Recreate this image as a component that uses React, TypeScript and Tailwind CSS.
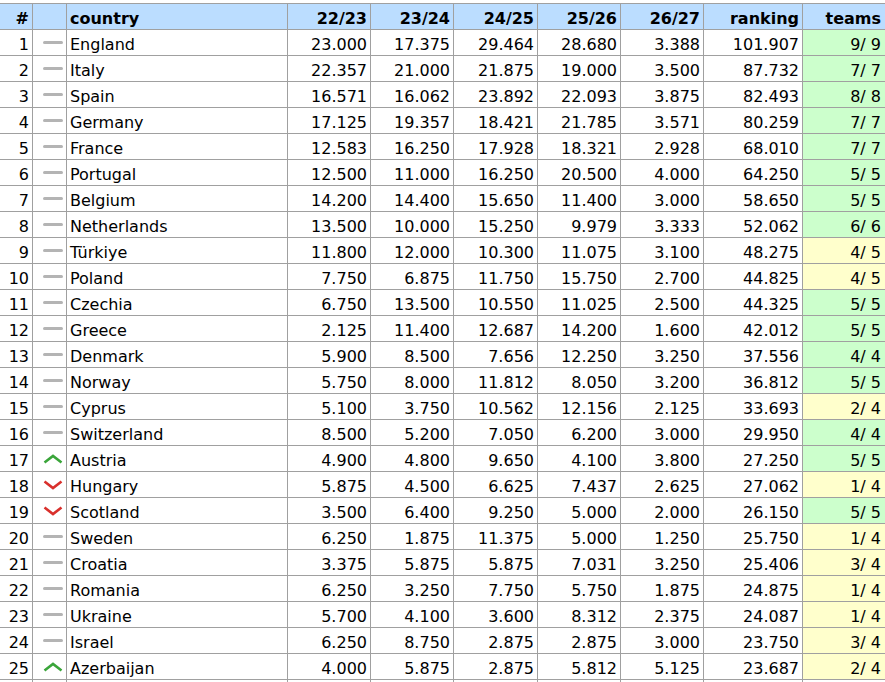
import React from 'react';

type Trend = 'same' | 'up' | 'down';

interface Row {
  country: string;
  trend: Trend;
  seasons: string[];
  ranking: string;
  teams: [number, number];
}

const rows: Row[] = [
  { country: 'England', trend: 'same', seasons: ['23.000', '17.375', '29.464', '28.680', '3.388'], ranking: '101.907', teams: [9, 9] },
  { country: 'Italy', trend: 'same', seasons: ['22.357', '21.000', '21.875', '19.000', '3.500'], ranking: '87.732', teams: [7, 7] },
  { country: 'Spain', trend: 'same', seasons: ['16.571', '16.062', '23.892', '22.093', '3.875'], ranking: '82.493', teams: [8, 8] },
  { country: 'Germany', trend: 'same', seasons: ['17.125', '19.357', '18.421', '21.785', '3.571'], ranking: '80.259', teams: [7, 7] },
  { country: 'France', trend: 'same', seasons: ['12.583', '16.250', '17.928', '18.321', '2.928'], ranking: '68.010', teams: [7, 7] },
  { country: 'Portugal', trend: 'same', seasons: ['12.500', '11.000', '16.250', '20.500', '4.000'], ranking: '64.250', teams: [5, 5] },
  { country: 'Belgium', trend: 'same', seasons: ['14.200', '14.400', '15.650', '11.400', '3.000'], ranking: '58.650', teams: [5, 5] },
  { country: 'Netherlands', trend: 'same', seasons: ['13.500', '10.000', '15.250', '9.979', '3.333'], ranking: '52.062', teams: [6, 6] },
  { country: 'Türkiye', trend: 'same', seasons: ['11.800', '12.000', '10.300', '11.075', '3.100'], ranking: '48.275', teams: [4, 5] },
  { country: 'Poland', trend: 'same', seasons: ['7.750', '6.875', '11.750', '15.750', '2.700'], ranking: '44.825', teams: [4, 5] },
  { country: 'Czechia', trend: 'same', seasons: ['6.750', '13.500', '10.550', '11.025', '2.500'], ranking: '44.325', teams: [5, 5] },
  { country: 'Greece', trend: 'same', seasons: ['2.125', '11.400', '12.687', '14.200', '1.600'], ranking: '42.012', teams: [5, 5] },
  { country: 'Denmark', trend: 'same', seasons: ['5.900', '8.500', '7.656', '12.250', '3.250'], ranking: '37.556', teams: [4, 4] },
  { country: 'Norway', trend: 'same', seasons: ['5.750', '8.000', '11.812', '8.050', '3.200'], ranking: '36.812', teams: [5, 5] },
  { country: 'Cyprus', trend: 'same', seasons: ['5.100', '3.750', '10.562', '12.156', '2.125'], ranking: '33.693', teams: [2, 4] },
  { country: 'Switzerland', trend: 'same', seasons: ['8.500', '5.200', '7.050', '6.200', '3.000'], ranking: '29.950', teams: [4, 4] },
  { country: 'Austria', trend: 'up', seasons: ['4.900', '4.800', '9.650', '4.100', '3.800'], ranking: '27.250', teams: [5, 5] },
  { country: 'Hungary', trend: 'down', seasons: ['5.875', '4.500', '6.625', '7.437', '2.625'], ranking: '27.062', teams: [1, 4] },
  { country: 'Scotland', trend: 'down', seasons: ['3.500', '6.400', '9.250', '5.000', '2.000'], ranking: '26.150', teams: [5, 5] },
  { country: 'Sweden', trend: 'same', seasons: ['6.250', '1.875', '11.375', '5.000', '1.250'], ranking: '25.750', teams: [1, 4] },
  { country: 'Croatia', trend: 'same', seasons: ['3.375', '5.875', '5.875', '7.031', '3.250'], ranking: '25.406', teams: [3, 4] },
  { country: 'Romania', trend: 'same', seasons: ['6.250', '3.250', '7.750', '5.750', '1.875'], ranking: '24.875', teams: [1, 4] },
  { country: 'Ukraine', trend: 'same', seasons: ['5.700', '4.100', '3.600', '8.312', '2.375'], ranking: '24.087', teams: [1, 4] },
  { country: 'Israel', trend: 'same', seasons: ['6.250', '8.750', '2.875', '2.875', '3.000'], ranking: '23.750', teams: [3, 4] },
  { country: 'Azerbaijan', trend: 'up', seasons: ['4.000', '5.875', '2.875', '5.812', '5.125'], ranking: '23.687', teams: [2, 4] },
];

const seasonLabels = ['22/23', '23/24', '24/25', '25/26', '26/27'];
const seasonWidths = ['w-[83px]', 'w-[83px]', 'w-[84px]', 'w-[83px]', 'w-[83px]'];

function TrendIcon({ trend }: { trend: Trend }) {
  if (trend === 'up') {
    return (
      <svg width="20" height="10" viewBox="0 0 20 10">
        <polyline points="1.5,8.5 10,2 18.5,8.5" fill="none" stroke="#3aa53a" strokeWidth="2.6" />
      </svg>
    );
  }
  if (trend === 'down') {
    return (
      <svg width="20" height="10" viewBox="0 0 20 10">
        <polyline points="1.5,1.5 10,8 18.5,1.5" fill="none" stroke="#d9302c" strokeWidth="2.6" />
      </svg>
    );
  }
  return <div className="h-[3px] w-[20px] rounded-full bg-[#b4b4b4]" />;
}

// text cells: line box pushed 2px down so the baseline sits like Verdana's
const cell = 'shrink-0 border-l border-[#a0a0a0] h-[25px] overflow-hidden whitespace-pre';
const txt = 'pt-[2px] leading-[25px]';

export default function App() {
  return (
    <div
      className="h-[682px] w-[885px] overflow-hidden bg-white pt-[3px] text-[16px] text-black"
      style={{ fontFamily: '"DejaVu Sans", Verdana, sans-serif' }}
    >
      <div className="-ml-px w-[888px]">
        <div className="flex border-t border-[#a0a0a0] bg-[#bbddff] font-bold">
          <div className={`${cell} ${txt} w-[33px] pr-[3px] text-right`}>#</div>
          <div className={`${cell} w-[34px]`} />
          <div className={`${cell} ${txt} w-[221px] pl-[3px]`}>country</div>
          {seasonLabels.map((s, i) => (
            <div key={s} className={`${cell} ${txt} ${seasonWidths[i]} pr-[3px] text-right`}>{s}</div>
          ))}
          <div className={`${cell} ${txt} w-[99px] pr-[3px] text-right`}>ranking</div>
          <div className={`${cell} ${txt} w-[84px] pr-[4px] text-right border-r`}>teams</div>
        </div>
        {rows.map((r, idx) => (
          <div key={r.country} className="flex border-t border-[#a0a0a0]">
            <div className={`${cell} ${txt} w-[33px] pr-[3px] text-right`}>{idx + 1}</div>
            <div className={`${cell} w-[34px] flex items-center pl-[10px]`}>
              <TrendIcon trend={r.trend} />
            </div>
            <div className={`${cell} ${txt} w-[221px] pl-[3px]`}>{r.country}</div>
            {r.seasons.map((v, i) => (
              <div key={i} className={`${cell} ${txt} ${seasonWidths[i]} pr-[3px] text-right`}>{v}</div>
            ))}
            <div className={`${cell} ${txt} w-[99px] pr-[3px] text-right`}>{r.ranking}</div>
            <div
              className={`${cell} ${txt} w-[84px] pr-[4px] text-right border-r ${
                r.teams[0] === r.teams[1] ? 'bg-[#ccffcc]' : 'bg-[#ffffcc]'
              }`}
            >
              {`${r.teams[0]}/ ${r.teams[1]}`}
            </div>
          </div>
        ))}
        <div className="flex border-t border-[#a0a0a0]">
          <div className={`${cell} w-[33px]`} />
          <div className={`${cell} w-[34px]`} />
          <div className={`${cell} w-[221px]`} />
          {seasonWidths.map((w, i) => (
            <div key={i} className={`${cell} ${w}`} />
          ))}
          <div className={`${cell} w-[99px]`} />
          <div className={`${cell} w-[84px] border-r`} />
        </div>
      </div>
    </div>
  );
}
